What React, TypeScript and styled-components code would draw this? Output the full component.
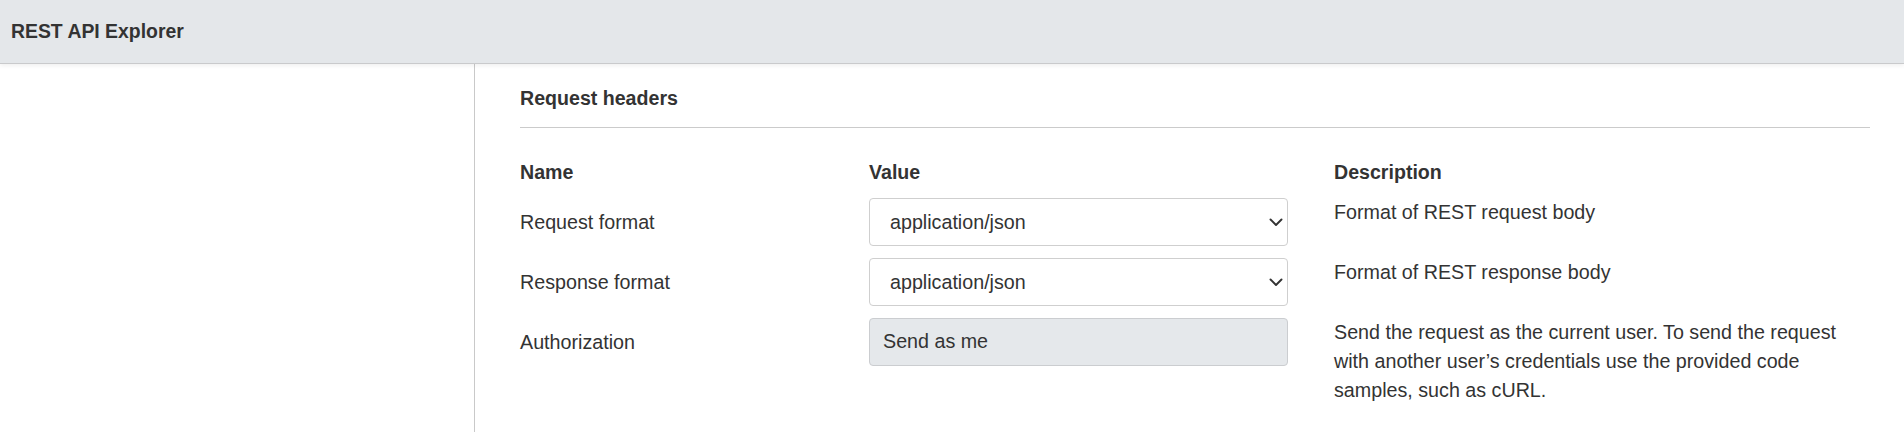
import styled, { createGlobalStyle } from "styled-components";

const GlobalStyle = createGlobalStyle`
  html, body {
    margin: 0;
    padding: 0;
    background: #fff;
  }
  body {
    font-family: "Liberation Sans", Arial, Helvetica, sans-serif;
    font-size: 19.7px;
    line-height: 1.5;
    color: #333;
  }
`;

const Page = styled.div`
  display: flex;
  flex-direction: column;
  height: 432px;
  overflow: hidden;
`;

const TopBar = styled.header`
  position: relative;
  z-index: 2;
  display: flex;
  align-items: center;
  height: 63px;
  padding-left: 11px;
  background-color: #e4e7ea;
  border-bottom: 1px solid #c9cacc;
  box-shadow: 0 2px 4px rgba(0, 0, 0, 0.06);
`;

const TopTitle = styled.span`
  font-weight: bold;
  font-size: 19.4px;
  color: #333;
`;

const Main = styled.div`
  display: flex;
  flex: 1;
`;

const Sidebar = styled.aside`
  width: 474px;
  flex-shrink: 0;
  border-right: 1px solid #c9c9c9;
`;

const Content = styled.section`
  flex: 1;
  padding: 20px 34px 0 45px;
`;

const SectionTitle = styled.h3`
  margin: 0;
  font-size: 19.6px;
  font-weight: bold;
  line-height: 29px;
  color: #333;
`;

const Divider = styled.hr`
  margin: 14px 0 30px;
  border: 0;
  border-top: 1px solid #cbcbcb;
  height: 0;
`;

const Table = styled.div`
  display: flex;
  flex-direction: column;
  gap: 12px;
`;

const Row = styled.div`
  display: grid;
  grid-template-columns: 303px 419px 1fr;
  column-gap: 46px;
  align-items: start;
`;

const ColHead = styled.div`
  font-weight: bold;
  font-size: 19.6px;
  line-height: 28px;
`;

const Label = styled.div`
  display: flex;
  align-items: center;
  height: 48px;
  box-sizing: border-box;
  padding-top: 2px;
`;

const Description = styled.div`
  line-height: 29px;
`;

const SelectWrap = styled.div`
  position: relative;
  height: 48px;
`;

const Select = styled.select`
  appearance: none;
  -webkit-appearance: none;
  width: 100%;
  height: 48px;
  box-sizing: border-box;
  padding: 0 40px 0 20px;
  border: 1px solid #cfcfcf;
  border-radius: 4px;
  background: #fff;
  font-family: inherit;
  font-size: 19.7px;
  color: #333;
  outline: none;
`;

const Chevron = styled.svg`
  position: absolute;
  right: 5px;
  top: 50%;
  width: 14px;
  height: 9px;
  margin-top: -4px;
  pointer-events: none;
`;

const ReadOnlyField = styled.div`
  height: 48px;
  box-sizing: border-box;
  display: flex;
  align-items: center;
  padding: 0 13px;
  border: 1px solid #cbcdd0;
  border-radius: 4px;
  background-color: #e5e8eb;
  color: #333;
`;

const FormatSelect = ({ value }: { value: string }) => (
  <SelectWrap>
    <Select defaultValue={value}>
      <option value="application/json">application/json</option>
      <option value="application/xml">application/xml</option>
    </Select>
    <Chevron viewBox="0 0 14 9">
      <path d="M1.5 1.5 L7 7 L12.5 1.5" fill="none" stroke="#333" strokeWidth="1.9" strokeLinecap="round" strokeLinejoin="round" />
    </Chevron>
  </SelectWrap>
);

export default function App() {
  return (
    <>
      <GlobalStyle />
      <Page>
        <TopBar>
          <TopTitle>REST API Explorer</TopTitle>
        </TopBar>
        <Main>
          <Sidebar />
          <Content>
            <SectionTitle>Request headers</SectionTitle>
            <Divider />
            <Table>
              <Row>
                <ColHead>Name</ColHead>
                <ColHead>Value</ColHead>
                <ColHead>Description</ColHead>
              </Row>
              <Row>
                <Label>Request format</Label>
                <FormatSelect value="application/json" />
                <Description>Format of REST request body</Description>
              </Row>
              <Row>
                <Label>Response format</Label>
                <FormatSelect value="application/json" />
                <Description>Format of REST response body</Description>
              </Row>
              <Row>
                <Label>Authorization</Label>
                <ReadOnlyField>Send as me</ReadOnlyField>
                <Description>
                  Send the request as the current user. To send the request with another user’s credentials use the
                  provided code samples, such as cURL.
                </Description>
              </Row>
            </Table>
          </Content>
        </Main>
      </Page>
    </>
  );
}
